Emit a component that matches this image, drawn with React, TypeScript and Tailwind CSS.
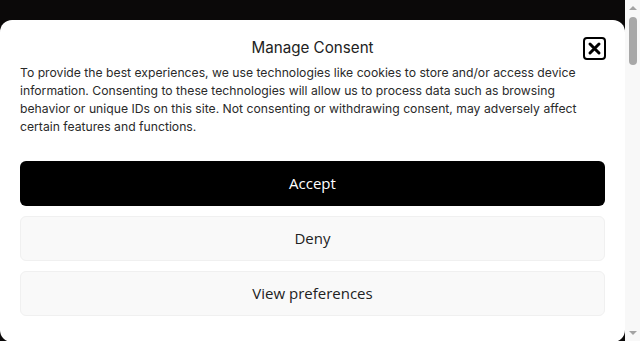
import React from 'react'

function CloseIcon() {
  return (
    <svg width="23" height="23" viewBox="0 0 23 23" fill="none">
      <rect x="1" y="1" width="21" height="21" rx="3" stroke="#000" strokeWidth="2" />
      <path d="M7 7 L16 16 M16 7 L7 16" stroke="#000" strokeWidth="3" strokeLinecap="round" />
    </svg>
  )
}

// fake page scrollbar, the screenshot shows the classic one
function Scrollbar() {
  return (
    <div className="flex h-full w-[15px] flex-col items-center bg-[#f8f8f8]">
      <div className="mt-[6px] h-0 w-0 border-x-[4px] border-b-[4px] border-x-transparent border-b-[#a3a3a3]" />
      <div className="mt-[7px] h-[48px] w-[8px] rounded-full bg-[#a8a8a8]" />
      <div className="flex-1" />
      <div className="mb-[6px] h-0 w-0 border-x-[4px] border-t-[4px] border-x-transparent border-t-[#a3a3a3]" />
    </div>
  )
}

function App() {
  return (
    <div className="flex h-[341px] overflow-hidden bg-[#0b0909]">
      <div className="flex-1 pt-[20px]">
        <div className="h-[322px] w-full rounded-[12px] bg-white px-5 pt-[17px] font-['Inter',sans-serif]">
          <div className="relative flex h-[22px] items-center justify-center">
            <h2 className="text-[15.2px] font-normal text-[#222]">Manage Consent</h2>
            <button className="absolute right-[-1px] top-0 flex">
              <CloseIcon />
            </button>
          </div>
          <p className="mt-[5px] max-w-[566px] text-[12.2px] leading-[18px] text-[#2a2a2a]">
            To provide the best experiences, we use technologies like cookies to store and/or access device information. Consenting to these technologies will allow us to process data such as browsing behavior or unique IDs on this site. Not consenting or withdrawing consent, may adversely affect certain features and functions.
          </p>
          <div className="mt-[25px] flex flex-col gap-[10px] font-['Open_Sans',sans-serif] text-[15px]">
            <button className="h-[45px] w-full rounded-[6px] bg-black text-white">Accept</button>
            <button className="h-[45px] w-full rounded-[6px] border border-[#f0f0f0] bg-[#f9f9f9] text-[#222]">Deny</button>
            <button className="h-[45px] w-full rounded-[6px] border border-[#f0f0f0] bg-[#f9f9f9] text-[#222]">View preferences</button>
          </div>
        </div>
      </div>
      <Scrollbar />
    </div>
  )
}

export default App
